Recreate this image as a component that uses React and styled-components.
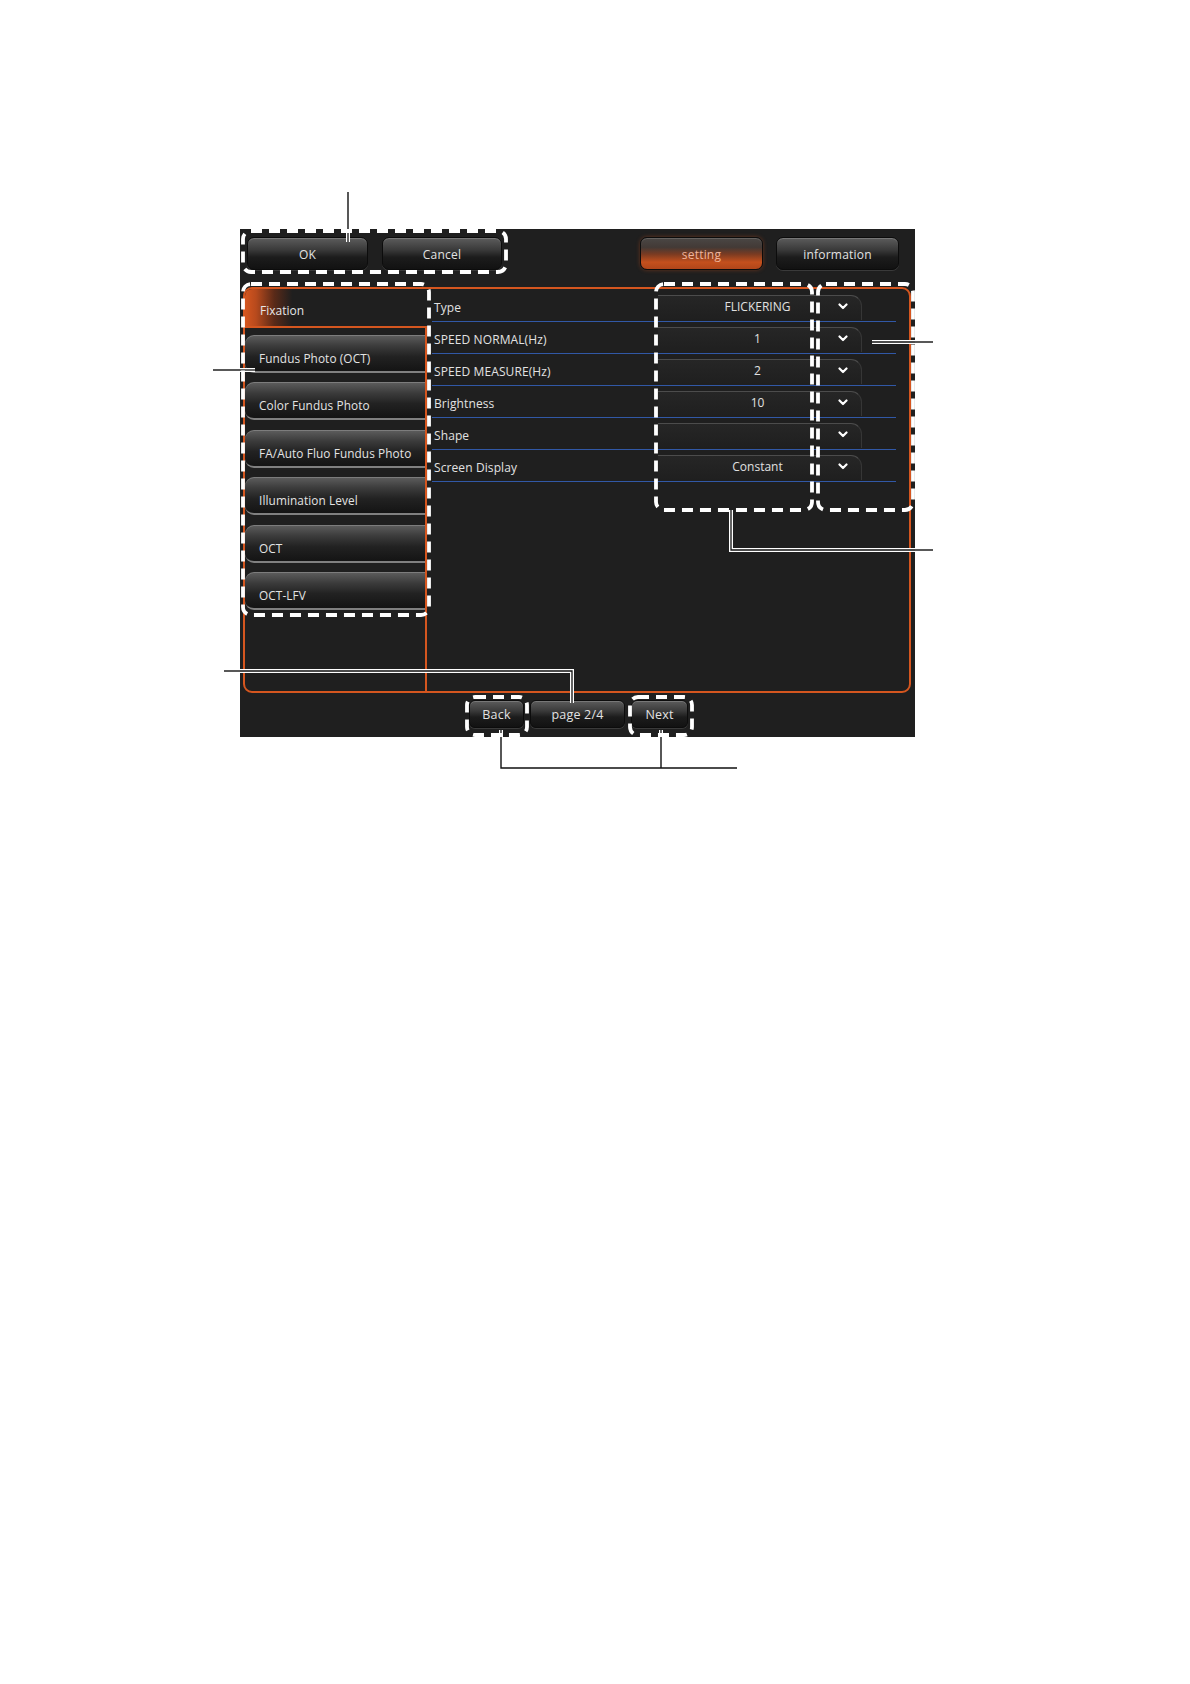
import styled, { createGlobalStyle, css } from "styled-components";

const GlobalStyle = createGlobalStyle`
  body {
    margin: 0;
    background: #ffffff;
    font-family: "Open Sans", "DejaVu Sans", sans-serif;
  }
`;

const ORANGE = "#d5561f";

const Page = styled.div`
  position: relative;
  width: 1190px;
  min-height: 1684px;
  padding: 229px 0 0 240px;
  box-sizing: border-box;
`;

const Screen = styled.div`
  width: 675px;
  height: 508px;
  background: #1f1f1f;
  display: flex;
  flex-direction: column;
`;

const TopBar = styled.div`
  height: 58px;
  flex: none;
  box-sizing: border-box;
  padding: 8px 16px 0 7px;
  display: flex;
  justify-content: space-between;
  align-items: flex-start;
`;

const ButtonGroup = styled.div`
  display: flex;
  gap: ${(p) => p.$gap}px;
`;

const glossy = css`
  background: linear-gradient(
    to bottom,
    #5c5c5c 0%,
    #3a3a3a 38%,
    #1c1c1c 62%,
    #121212 100%
  );
  border: 1px solid #0c0c0c;
  box-shadow: inset 0 1px 0 rgba(255, 255, 255, 0.18),
    0 1px 0 rgba(255, 255, 255, 0.12);
  color: #e2e2e2;
  font-size: 12px;
  letter-spacing: 0.2px;
`;

const TopButton = styled.div`
  ${glossy}
  width: ${(p) => p.$w}px;
  height: 33px;
  box-sizing: border-box;
  border-radius: 7px;
  display: flex;
  align-items: center;
  justify-content: center;
  padding-top: 1px;

  ${(p) =>
    p.$active &&
    css`
      background: linear-gradient(
        to bottom,
        #4a4745 0%,
        #433a36 30%,
        #7a3b22 52%,
        #c4501d 78%,
        #b0461a 100%
      );
      color: #f0b59c;
      box-shadow: inset 0 1px 0 rgba(255, 255, 255, 0.15),
        0 0 4px rgba(213, 86, 31, 0.4);
    `}
`;

const Panel = styled.div`
  height: 406px;
  flex: none;
  box-sizing: border-box;
  margin: 0 4px 0 3px;
  border: 2px solid ${ORANGE};
  border-radius: 9px;
  overflow: hidden;
  display: grid;
  grid-template-columns: 182px 1fr;
`;

const LeftColumn = styled.div`
  display: flex;
  flex-direction: column;
`;

const ActiveTab = styled.div`
  height: 37px;
  flex: none;
  display: flex;
  align-items: center;
  padding: 5px 0 0 15px;
  box-sizing: border-box;
  color: #e6e6e6;
  font-size: 12px;
  background: linear-gradient(
    to right,
    ${ORANGE} 0%,
    #b84a1d 6%,
    #5a2a18 16%,
    #1f1f1f 26%
  );
`;

const TabList = styled.div`
  flex: 1;
  border-top: 2px solid ${ORANGE};
  border-right: 2px solid ${ORANGE};
  padding-top: 7px;
  display: flex;
  flex-direction: column;
  gap: 9.4px;
`;

const TabButton = styled.div`
  height: 38px;
  flex: none;
  box-sizing: border-box;
  border-radius: 9px 0 0 9px;
  background: linear-gradient(
    to bottom,
    #5e5e5e 0%,
    #3c3c3c 30%,
    #222222 60%,
    #141414 100%
  );
  border-bottom: 2px solid #808080;
  box-shadow: inset 0 1px 0 rgba(255, 255, 255, 0.2);
  display: flex;
  align-items: center;
  padding: 10px 0 0 14px;
  color: #e4e4e4;
  font-size: 11.8px;
  letter-spacing: 0.1px;
`;

const Rows = styled.div`
  padding: 1px 13px 0 5px;
`;

const Row = styled.div`
  height: 32px;
  box-sizing: border-box;
  border-bottom: 1px solid #3158a6;
  display: flex;
  align-items: stretch;
`;

const Label = styled.div`
  width: 226px;
  flex: none;
  box-sizing: border-box;
  padding: 4px 0 0 2px;
  display: flex;
  align-items: center;
  color: #e2e2e2;
  font-size: 12px;
  letter-spacing: 0.1px;
`;

const ValueBox = styled.div`
  width: 204px;
  margin-top: 5px;
  margin-bottom: 1px;
  box-sizing: border-box;
  border-top: 1px solid #4c4c4c;
  border-right: 1px solid #363636;
  border-top-right-radius: 11px;
  background: linear-gradient(to bottom, #262626, #1f1f1f);
  display: flex;
  align-items: center;
`;

const ValueText = styled.div`
  flex: 1;
  padding-left: 32px;
  text-align: center;
  color: #e0e0e0;
  font-size: 12px;
  padding-bottom: 4px;
`;

const ChevronCell = styled.div`
  width: 36px;
  flex: none;
  display: flex;
  justify-content: center;
  padding-bottom: 4px;
`;

const BottomBar = styled.div`
  flex: 1;
  display: flex;
  justify-content: center;
  align-items: flex-start;
  padding: 7px 0 0 2px;
  gap: 6px;
`;

const BottomButton = styled.div`
  ${glossy}
  width: ${(p) => p.$w}px;
  height: 28px;
  box-sizing: border-box;
  border-radius: 6px;
  display: flex;
  align-items: center;
  justify-content: center;
  font-size: 12.5px;
`;

const Overlay = styled.svg`
  position: absolute;
  top: 0;
  left: 0;
  pointer-events: none;
`;

const Chevron = () => (
  <svg width="10" height="7" viewBox="0 0 10 7">
    <polyline
      points="1.5,1.5 5,5 8.5,1.5"
      fill="none"
      stroke="#ffffff"
      strokeWidth="2.2"
      strokeLinecap="round"
      strokeLinejoin="round"
    />
  </svg>
);

const tabs = [
  "Fundus Photo (OCT)",
  "Color Fundus Photo",
  "FA/Auto Fluo Fundus Photo",
  "Illumination Level",
  "OCT",
  "OCT-LFV",
];

const rows = [
  { label: "Type", value: "FLICKERING" },
  { label: "SPEED NORMAL(Hz)", value: "1" },
  { label: "SPEED MEASURE(Hz)", value: "2" },
  { label: "Brightness", value: "10" },
  { label: "Shape", value: "" },
  { label: "Screen Display", value: "Constant" },
];

// dashed callout boxes, page coordinates
const boxes = [
  [243, 231, 263, 41],
  [243, 284, 186, 331],
  [656, 284, 156, 226],
  [818, 284, 95, 226],
  [467, 697, 60, 38],
  [630, 697, 62, 38],
];

// leader lines: dark = drawn over the screen (gets a white halo)
const leaders = [
  { d: "M348 192 V229", dark: false },
  { d: "M348 229 V242", dark: true },
  { d: "M213 370 H240", dark: false },
  { d: "M240 370 H255", dark: true },
  { d: "M872 342 H915", dark: true },
  { d: "M915 342 H933", dark: false },
  { d: "M731 510 V550 H915", dark: true },
  { d: "M915 550 H933", dark: false },
  { d: "M224 671 H240", dark: false },
  { d: "M240 671 H572 V703", dark: true },
  { d: "M501 730 V737", dark: true },
  { d: "M661 730 V737", dark: true },
  { d: "M501 737 V768 H737 M661 737 V768", dark: false },
];

const Annotations = () => (
  <Overlay width="1190" height="1684" viewBox="0 0 1190 1684">
    {leaders.map((l, i) =>
      l.dark ? (
        <g key={i} fill="none">
          <path d={l.d} stroke="#ffffff" strokeWidth="4" />
          <path d={l.d} stroke="#111111" strokeWidth="1.3" />
        </g>
      ) : (
        <path key={i} d={l.d} fill="none" stroke="#111111" strokeWidth="1.4" />
      )
    )}
    {boxes.map(([x, y, w, h], i) => (
      <rect
        key={i}
        x={x}
        y={y}
        width={w}
        height={h}
        rx="8"
        fill="none"
        stroke="#ffffff"
        strokeWidth="3.8"
        strokeDasharray="11 7"
      />
    ))}
  </Overlay>
);

export default function App() {
  return (
    <>
      <GlobalStyle />
      <Page>
        <Screen>
          <TopBar>
            <ButtonGroup $gap={14}>
              <TopButton $w={121}>OK</TopButton>
              <TopButton $w={120}>Cancel</TopButton>
            </ButtonGroup>
            <ButtonGroup $gap={13}>
              <TopButton $w={123} $active>
                setting
              </TopButton>
              <TopButton $w={123}>information</TopButton>
            </ButtonGroup>
          </TopBar>
          <Panel>
            <LeftColumn>
              <ActiveTab>Fixation</ActiveTab>
              <TabList>
                {tabs.map((t) => (
                  <TabButton key={t}>{t}</TabButton>
                ))}
              </TabList>
            </LeftColumn>
            <Rows>
              {rows.map((r) => (
                <Row key={r.label}>
                  <Label>{r.label}</Label>
                  <ValueBox>
                    <ValueText>{r.value}</ValueText>
                    <ChevronCell>
                      <Chevron />
                    </ChevronCell>
                  </ValueBox>
                </Row>
              ))}
            </Rows>
          </Panel>
          <BottomBar>
            <BottomButton $w={55}>Back</BottomButton>
            <BottomButton $w={95}>page 2/4</BottomButton>
            <BottomButton $w={57}>Next</BottomButton>
          </BottomBar>
        </Screen>
        <Annotations />
      </Page>
    </>
  );
}
